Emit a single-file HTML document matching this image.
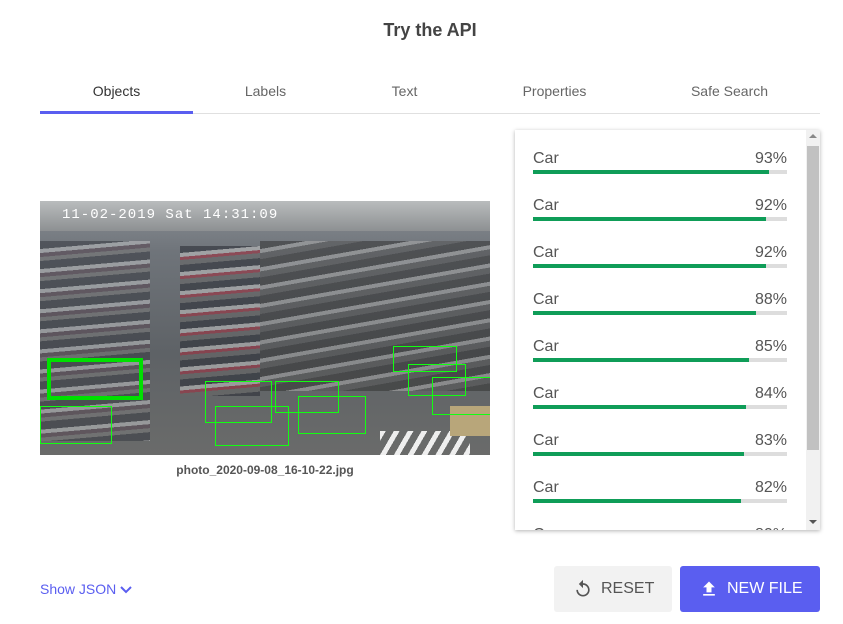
<!DOCTYPE html>
<html><head><meta charset="utf-8"><style>
body{margin:0;width:843px;height:624px;background:#fff;font-family:"Liberation Sans",sans-serif;position:relative;overflow:hidden}
.a{position:absolute}
.title{top:20px;left:0;width:860px;text-align:center;font-size:18px;font-weight:bold;color:#444}
.tab{top:83px;font-size:14px;color:#666;text-align:center;width:153px}
.item{left:533px;width:254px;height:30px}
.item .l{position:absolute;left:0;top:1px;font-size:16px;color:#555}
.item .r{position:absolute;right:0;top:1px;font-size:16px;color:#555}
.item .bg{position:absolute;left:0;top:21px;width:254px;height:4px;background:#ddd}
.item .fg{position:absolute;left:0;top:21px;height:4px;background:#0f9d58}
.b{position:absolute;border:1px solid #1f1}
</style></head><body>
<div class="a title">Try the API</div>
<div class="a tab" style="left:40px;color:#333">Objects</div>
<div class="a tab" style="left:189px">Labels</div>
<div class="a tab" style="left:328px">Text</div>
<div class="a tab" style="left:478px">Properties</div>
<div class="a tab" style="left:653px">Safe Search</div>
<div class="a" style="left:40px;top:113px;width:780px;height:1px;background:#e0e0e0"></div>
<div class="a" style="left:40px;top:111px;width:153px;height:3px;background:#5a5ef0"></div>

<div class="a" style="left:40px;top:201px;width:450px;height:254px;background:linear-gradient(180deg,#8a8f95 0%,#6f747a 20%,#5e6266 60%,#6a6b6a 100%);overflow:hidden">
<div class="a" style="left:0;top:0;width:450px;height:30px;background:linear-gradient(180deg,#b9bcbd,#8d9092)"></div>
<div class="a" style="left:22px;top:6px;color:#fff;font-family:'Liberation Mono',monospace;font-size:14px;letter-spacing:1px">11-02-2019 Sat 14:31:09</div>
<div class="a" style="left:0;top:40px;width:110px;height:200px;background:repeating-linear-gradient(175deg,#3a3d44 0 8px,#b8babc 8px 12px,#5a4a55 12px 16px,#777 16px 20px);opacity:.6"></div>
<div class="a" style="left:140px;top:45px;width:80px;height:150px;background:repeating-linear-gradient(175deg,#2b2e36 0 7px,#c0c0c0 7px 11px,#a03040 11px 14px,#666 14px 19px);opacity:.6"></div>
<div class="a" style="left:220px;top:40px;width:230px;height:150px;background:repeating-linear-gradient(170deg,#333 0 8px,#aaa 8px 12px,#555 12px 18px);opacity:.55"></div>
<div class="a" style="left:340px;top:230px;width:90px;height:24px;background:repeating-linear-gradient(120deg,#eee 0 5px,transparent 5px 12px)"></div>
<div class="a" style="left:410px;top:205px;width:40px;height:30px;background:#b8a67a"></div>
<div class="a" style="left:7px;top:157px;width:88px;height:34px;border:4px solid #00e000"></div>
<div class="b" style="left:0;top:205px;width:70px;height:36px"></div>
<div class="b" style="left:165px;top:180px;width:65px;height:40px"></div>
<div class="b" style="left:175px;top:205px;width:72px;height:38px"></div>
<div class="b" style="left:235px;top:180px;width:62px;height:30px"></div>
<div class="b" style="left:258px;top:195px;width:66px;height:36px"></div>
<div class="b" style="left:353px;top:145px;width:62px;height:24px"></div>
<div class="b" style="left:368px;top:163px;width:56px;height:30px"></div>
<div class="b" style="left:392px;top:176px;width:58px;height:36px"></div>
</div>
<div class="a" style="left:40px;top:463px;width:450px;text-align:center;font-size:12px;font-weight:bold;color:#555">photo_2020-09-08_16-10-22.jpg</div>

<div class="a" style="left:515px;top:130px;width:305px;height:400px;background:#fff;box-shadow:0 1px 4px rgba(0,0,0,.3);overflow:hidden">
<div class="a" style="left:291px;top:0;width:14px;height:400px;background:#f1f1f1"></div>
<div class="a" style="left:292px;top:16px;width:12px;height:304px;background:#c1c1c1"></div>
<div class="a" style="left:294px;top:4px;width:0;height:0;border-left:4px solid transparent;border-right:4px solid transparent;border-bottom:4px solid #888"></div>
<div class="a" style="left:294px;top:390px;width:0;height:0;border-left:4px solid transparent;border-right:4px solid transparent;border-top:4px solid #555"></div>
</div>
<div class="a item" style="top:149px"><span class="l">Car</span><span class="r">93%</span><div class="bg"></div><div class="fg" style="width:236px"></div></div>
<div class="a item" style="top:196px"><span class="l">Car</span><span class="r">92%</span><div class="bg"></div><div class="fg" style="width:233px"></div></div>
<div class="a item" style="top:243px"><span class="l">Car</span><span class="r">92%</span><div class="bg"></div><div class="fg" style="width:233px"></div></div>
<div class="a item" style="top:290px"><span class="l">Car</span><span class="r">88%</span><div class="bg"></div><div class="fg" style="width:223px"></div></div>
<div class="a item" style="top:337px"><span class="l">Car</span><span class="r">85%</span><div class="bg"></div><div class="fg" style="width:216px"></div></div>
<div class="a item" style="top:384px"><span class="l">Car</span><span class="r">84%</span><div class="bg"></div><div class="fg" style="width:213px"></div></div>
<div class="a item" style="top:431px"><span class="l">Car</span><span class="r">83%</span><div class="bg"></div><div class="fg" style="width:211px"></div></div>
<div class="a item" style="top:478px"><span class="l">Car</span><span class="r">82%</span><div class="bg"></div><div class="fg" style="width:208px"></div></div>
<div class="a" style="left:515px;top:520px;width:291px;height:10px;overflow:hidden"><div class="a item" style="left:18px;top:5px;"><span class="l">Car</span><span class="r">80%</span></div></div>

<div class="a" style="left:40px;top:581px;font-size:14px;color:#5a5ef0">Show JSON <svg width="12" height="10" viewBox="0 0 12 10" style="vertical-align:middle"><path d="M1 2l5 5 5-5" stroke="#5a5ef0" stroke-width="2" fill="none"/></svg></div>
<div class="a" style="left:554px;top:566px;width:118px;height:46px;background:#f2f2f2;border-radius:3px"></div>
<svg class="a" style="left:573px;top:579px" width="20" height="20" viewBox="0 0 24 24"><path d="M12 5V1L7 6l5 5V7c3.3 0 6 2.7 6 6s-2.7 6-6 6-6-2.7-6-6H4c0 4.4 3.6 8 8 8s8-3.6 8-8-3.6-8-8-8z" fill="#555"/></svg>
<div class="a" style="left:601px;top:580px;font-size:16px;color:#555">RESET</div>
<div class="a" style="left:680px;top:566px;width:140px;height:46px;background:#5a5ef0;border-radius:3px"></div>
<svg class="a" style="left:699px;top:579px" width="20" height="20" viewBox="0 0 24 24"><path d="M9 16h6v-6h4l-7-7-7 7h4zm-4 2h14v2H5z" fill="#fff"/></svg>
<div class="a" style="left:727px;top:580px;font-size:16px;color:#fff">NEW FILE</div>
</body></html>
